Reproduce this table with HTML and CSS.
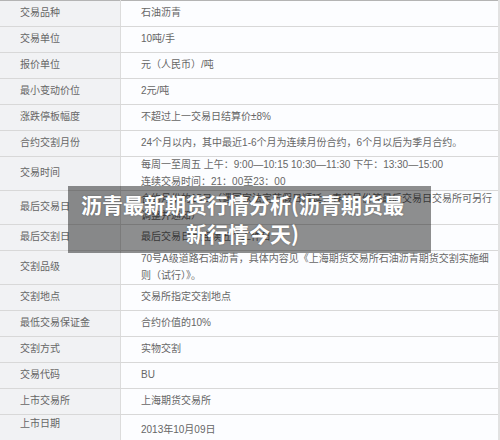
FILE: index.html
```html
<!DOCTYPE html>
<html lang="zh-CN">
<head>
<meta charset="utf-8">
<title>沥青期货合约</title>
<link rel="stylesheet" href="styles.css">
</head>
<body>
<div class="wrap">
  <table class="spec">
    <tbody>
      <tr><td class="k">交易品种</td><td class="v">石油沥青</td></tr>
      <tr><td class="k">交易单位</td><td class="v">10吨/手</td></tr>
      <tr><td class="k">报价单位</td><td class="v">元（人民币）/吨</td></tr>
      <tr><td class="k">最小变动价位</td><td class="v">2元/吨</td></tr>
      <tr><td class="k">涨跌停板幅度</td><td class="v">不超过上一交易日结算价±8%</td></tr>
      <tr><td class="k">合约交割月份</td><td class="v">24个月以内，其中最近1-6个月为连续月份合约，6个月以后为季月合约。</td></tr>
      <tr class="multi"><td class="k">交易时间</td><td class="v">每周一至周五 上午：9:00—10:15 10:30—11:30 下午：13:30—15:00<br>连续交易时间：21：00至23：00</td></tr>
      <tr class="multi"><td class="k">最后交易日</td><td class="v">合约月份的15日（遇国家法定节假日顺延，春节月份等最后交易日交易所可另行<br>调整并通知）</td></tr>
      <tr><td class="k">最后交割日</td><td class="v">最后交易日后连续五个工作日</td></tr>
      <tr class="multi"><td class="k">交割品级</td><td class="v">70号A级道路石油沥青，具体内容见《上海期货交易所石油沥青期货交割实施细<br>则（试行）》。</td></tr>
      <tr><td class="k">交割地点</td><td class="v">交易所指定交割地点</td></tr>
      <tr><td class="k">最低交易保证金</td><td class="v">合约价值的10%</td></tr>
      <tr><td class="k">交割方式</td><td class="v">实物交割</td></tr>
      <tr><td class="k">交易代码</td><td class="v">BU</td></tr>
      <tr><td class="k">上市交易所</td><td class="v">上海期货交易所</td></tr>
      <tr class="last"><td class="k">上市日期</td><td class="v">2013年10月09日</td></tr>
    </tbody>
  </table>
  <div class="title-overlay"><span>沥青最新期货行情分析(沥青期货最新行情今天)</span></div>
</div>
</body>
</html>
```

FILE: styles.css
```css
html, body {
  margin: 0;
  padding: 0;
  background: #ffffff;
}

.wrap {
  position: relative;
  width: 500px;
  height: 440px;
  overflow: hidden;
}

.spec {
  width: 500px;
  border-collapse: collapse;
  border-top: 1px solid #b4b4b4;
  border-right: 2px solid #e2e2e2;
  font-family: "Liberation Sans", "Noto Sans CJK SC", sans-serif;
  font-size: 10px;
  color: #666666;
}

.spec td {
  height: 25px;
  padding: 0 0 0 20px;
  line-height: 16.5px;
  vertical-align: middle;
  border-bottom: 1px solid #d8d8d8;
  white-space: nowrap;
}

.spec .multi td {
  height: 33px;
}

.spec .k {
  width: 100px;
  background: #f1f2f4;
  border-right: 1px solid #dcdcdc;
}

.spec .v {
  background: #fcfdff;
}

.spec .last td {
  height: 23px;
}

.spec .last .k {
  vertical-align: top;
  padding-top: 1px;
}

.spec .last .v {
  padding-top: 4px;
}

.title-overlay {
  position: absolute;
  left: 68px;
  top: 186px;
  width: 363px;
  height: 67px;
  box-sizing: border-box;
  padding: 4px 22px 4px 8px;
  background: rgba(0, 0, 0, 0.44);
  color: #ffffff;
  font-family: "Noto Sans CJK SC", sans-serif;
  font-weight: 700;
  font-size: 21px;
  line-height: 29px;
  text-align: center;
  text-shadow: 0 0 2px rgba(0, 0, 0, 0.3);
}
```
